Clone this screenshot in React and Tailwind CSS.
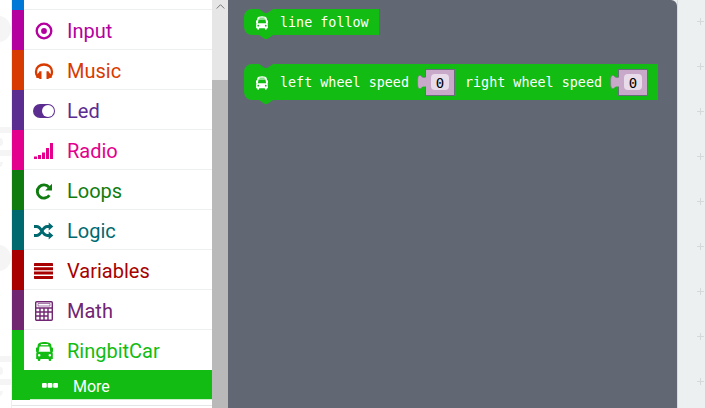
import React from "react";

function BusIcon({ className }) {
  return (
    <svg className={className} viewBox="0 0 17 19" fill="currentColor">
      <path fillRule="evenodd" d="M1.700 3.200C1.900 1 5 0 8.500 0s6.600 1 6.800 3.200l.3 2.300h.6q.8 0 .8.800v3q0 .7-.7.800.5 1 .5 2.200V17h-1.500v.7a1.300 1.300 0 0 1-2.700 0V17H4.400v.7a1.300 1.300 0 0 1-2.700 0V17H.2v-4.700q0-1.200.5-2.200Q0 10 0 9.300v-3q0-.8.8-.8h.6ZM4.800 2v1.200h7.400V2ZM3.600 4.600 2.700 9.700h11.600L13.400 4.600ZM3.200 12a1.200 1.200 0 1 0 0 2.500 1.200 1.200 0 0 0 0-2.500Zm10.600 0a1.200 1.200 0 1 0 0 2.500 1.200 1.200 0 0 0 0-2.500Z" />
    </svg>
  );
}

const TargetIcon = () => (
  <svg width="18" height="18" viewBox="0 0 18 18" fill="none">
    <circle cx="9" cy="9" r="7.300" stroke="currentColor" strokeWidth="2.300" />
    <circle cx="9" cy="9" r="2.900" fill="currentColor" />
  </svg>
);
const HeadphonesIcon = () => (
  <svg width="20" height="16" viewBox="0 0 20 16" fill="none">
    <path d="M3.300 12.800C1.900 11.300 2 9.900 2 8.700 2 4.400 5.600 1.500 10 1.500s8 2.900 8 7.200c0 1.200.1 2.600-1.300 4.100" stroke="currentColor" strokeWidth="2.300" />
    <path d="M2.200 12.500 5.300 9V8.300h2.200V16H5.300v-.7l-3.100-.6ZM17.800 12.500 14.700 9V8.300h-2.200V16h2.200v-.7l3.100-.6Z" fill="currentColor" />
  </svg>
);
const ToggleIcon = () => (
  <svg width="22" height="14" viewBox="0 0 22 14">
    <rect width="22" height="14" rx="7" fill="currentColor" />
    <circle cx="15" cy="7" r="6" fill="white" />
  </svg>
);
const SignalIcon = () => (
  <svg width="20" height="16" viewBox="0 0 20 16" fill="currentColor">
    <path d="M0 13.500h3V16H0ZM4 12h3v4H4ZM8 9.500h3V16H8ZM12 5h3v11h-3ZM16 0h3v16h-3Z" />
  </svg>
);
const RepeatIcon = () => (
  <svg width="18" height="17" viewBox="0 0 18 17" fill="none">
    <path d="M14 4.300A6.600 6.600 0 1 0 14.400 12.200" stroke="currentColor" strokeWidth="2.900" />
    <path d="M17 .7v6.800H10.200Z" fill="currentColor" />
  </svg>
);
const ShuffleIcon = () => (
  <svg width="20" height="18" viewBox="0 0 20 18" fill="none">
    <path d="M0 4.500h2.500c5.700 0 5.200 9 10.800 9H16M0 13.500h2.500c5.700 0 5.200-9 10.800-9H16" stroke="currentColor" strokeWidth="2.800" />
    <path d="m14.700.5 4.600 4-4.600 4Zm0 9 4.600 4-4.600 4Z" fill="currentColor" />
  </svg>
);
const LinesIcon = () => (
  <svg width="20" height="16" viewBox="0 0 20 16" fill="currentColor">
    <path d="M.7 0h17.600q.7 0 .7.700V3H0V.7Q0 0 .7 0ZM0 4.300h19v2.900H0ZM0 8.600h19v2.900H0ZM0 13h19v2.300q0 .7-.7.700H.7q-.7 0-.7-.7Z" />
  </svg>
);
const CalculatorIcon = () => (
  <svg width="18" height="20" viewBox="0 0 18 20" fill="none" stroke="currentColor">
    <rect x=".7" y=".7" width="16.600" height="18.600" rx="1" strokeWidth="1.400" />
    <path d="M1 7h16M1 11h16M1 15h12" strokeWidth="1.400" />
    <path d="M5 7v12M9 7v12M13 7v12" strokeWidth="1.400" />
    <path d="M3 2.500h12v2.500H3Z" strokeWidth=".6" />
  </svg>
);

const categories = [
  { name: "Input", Icon: TargetIcon, bar: "bg-[#b4009e]", text: "text-[#b4009e]" },
  { name: "Music", Icon: HeadphonesIcon, bar: "bg-[#d83b01]", text: "text-[#d83b01]" },
  { name: "Led", Icon: ToggleIcon, bar: "bg-[#5c2d91]", text: "text-[#5c2d91]" },
  { name: "Radio", Icon: SignalIcon, bar: "bg-[#e3008c]", text: "text-[#e3008c]" },
  { name: "Loops", Icon: RepeatIcon, bar: "bg-[#107c10]", text: "text-[#107c10]" },
  { name: "Logic", Icon: ShuffleIcon, bar: "bg-[#006970]", text: "text-[#006970]" },
  { name: "Variables", Icon: LinesIcon, bar: "bg-[#a80000]", text: "text-[#a80000]" },
  { name: "Math", Icon: CalculatorIcon, bar: "bg-[#712672]", text: "text-[#712672]" },
  { name: "RingbitCar", Icon: () => <BusIcon className="h-[19px] w-[17px]" />, bar: "bg-[#12bc12]", text: "text-[#12bc12]", last: true },
];

function Category({ name, Icon, bar, text, last }) {
  return (
    <div className="flex h-10 shrink-0">
      <div className={`w-3 ${bar}`} />
      <div className={`flex flex-1 items-center border-b pt-[3px] ${last ? "border-transparent" : "border-[#ecf0f1]"} ${text}`}>
        <span className="flex w-10 items-center justify-center">
          <Icon />
        </span>
        <span className="ml-[3px] text-[20px] leading-6">{name}</span>
      </div>
    </div>
  );
}

function SimulatorEdge() {
  return (
    <svg className="h-[408px] w-3 shrink-0" viewBox="0 0 12 408">
      <rect width="12" height="408" fill="#fff" />
      <g fill="#f5f5f5">
        {[0, 229].map((y) => (
          <g key={y} transform={`translate(0 ${y})`}>
            <path d="M0 16a13 13 0 0 1 11 13A13 13 0 0 1 0 42ZM0 127h12v6H0ZM0 138q3 0 3 4t-3 4ZM0 150h12v6H0ZM0 162h3q-1 5-3 5Z" />
          </g>
        ))}
      </g>
      <path d="M11.500 0v408" stroke="#eeeeee" />
    </svg>
  );
}

function BlockShape({ width, height }) {
  return (
    <svg className="absolute left-0 top-0" width={width} height={height + 4} viewBox={`0 0 ${width} ${height + 4}`}>
      <path fill="#12bc12" d={`M0 8A8 8 0 0 1 8 0H15L20 3.500Q22 4.500 24 3.500L29 0H${width}V${height}H29L24 ${height + 3.5}Q22 ${height + 4.5} 20 ${height + 3.5}L15 ${height}H8A8 8 0 0 1 0 ${height - 8}Z`} />
    </svg>
  );
}

function NumberInput() {
  return (
    <span className="flex h-[27px] w-[38px] items-center">
      <svg className="z-10 -mr-px h-[27px] w-[9px] shrink-0" viewBox="0 0 9 27">
        <path d="M9 8.500H7C5.500 8.500 5 8 3.500 6.500 1 6.200.6 8 .6 13s.4 7 2.900 6.500C5 18 5.500 17.500 7 17.500h2Z" fill="#c9a9c9" />
        <path d="M8 8.500H7C5.500 8.500 5 8 3.500 6.500 1 6.200.6 8 .6 13s.4 7 2.900 6.500" fill="none" stroke="#777c85" strokeWidth=".8" />
      </svg>
      <span className="flex h-[27px] w-[30px] items-center justify-center border border-[#686e79] bg-[#c9a9c9]">
        <span className="flex h-4 w-[18px] items-center justify-center rounded-[4px] bg-[#e9dcea] pt-px text-[14px] leading-4 text-black">0</span>
      </span>
    </span>
  );
}

function WorkspaceGrid() {
  return (
    <svg className="h-[408px] flex-1" viewBox="0 0 28 408">
      <path d="M.5 0v408" stroke="#d8dcdf" />
      {[21, 66, 111, 156, 201, 246, 291, 336, 381].map((y) => (
        <path key={y} d={`M20 ${y + 0.5}h7M23.500 ${y - 3}v7`} stroke="#d5d9da" />
      ))}
    </svg>
  );
}

export default function App() {
  return (
    <div className="flex h-[408px] w-[705px] overflow-hidden bg-[#ecf0f1] font-['Roboto',sans-serif]">
      <SimulatorEdge />
      <nav className="flex w-[200px] shrink-0 flex-col bg-white">
        <div className="flex h-2.5 shrink-0">
          <div className="w-3 bg-[#0078d7]" />
          <div className="flex-1 border-b border-[#ecf0f1]" />
        </div>
        {categories.map((c) => (
          <Category key={c.name} {...c} />
        ))}
        <div className="flex h-[30px] shrink-0 bg-[#12bc12]">
          <div className="w-[18px]" />
          <div className="flex flex-1 items-center border-b border-[#c8efc8] pt-[4px] text-white">
            <svg className="ml-3 mb-0.5 h-[5px] w-4" viewBox="0 0 16 5" fill="currentColor">
              <rect width="4.800" height="4.800" rx="1" />
              <rect x="5.600" width="4.800" height="4.800" rx="1" />
              <rect x="11.200" width="4.800" height="4.800" rx="1" />
            </svg>
            <span className="ml-[15px] text-[16px] leading-5">More</span>
          </div>
        </div>
        <div className="h-1.5 shrink-0 border-b border-[#e3e6e8]" />
      </nav>
      <div className="flex w-4 shrink-0 flex-col bg-[#b9b9b9]">
        <div className="flex h-20 justify-center bg-[#e6e6e6] pt-1">
          <svg className="h-[5px] w-[9px]" viewBox="0 0 9 5">
            <path d="M.7 4.500 4.500.7l3.800 3.800" fill="none" stroke="#777" />
          </svg>
        </div>
      </div>
      <main className="flex w-[449px] shrink-0 flex-col items-start rounded-tr-[6px] bg-[#616874] pl-4 pt-[9px] font-['DejaVu_Sans_Mono',monospace] text-[13.400px] text-white">
        <div className="relative h-[26px] w-[135px]">
          <BlockShape width={135} height={26} />
          <div className="relative flex h-full items-center pl-3">
            <BusIcon className="mt-px h-[14px] w-3" />
            <span className="ml-3 whitespace-pre pt-0.5">line follow</span>
          </div>
        </div>
        <div className="relative mt-[29px] h-9 w-[414px]">
          <BlockShape width={414} height={36} />
          <div className="relative flex h-full items-center pl-3">
            <BusIcon className="mt-0.5 h-[14px] w-3" />
            <span className="ml-3 w-[137px] whitespace-pre pt-0.5">left wheel speed</span>
            <NumberInput />
            <span className="ml-[10px] w-[145px] whitespace-pre pt-0.5">right wheel speed</span>
            <NumberInput />
          </div>
        </div>
      </main>
      <WorkspaceGrid />
    </div>
  );
}
